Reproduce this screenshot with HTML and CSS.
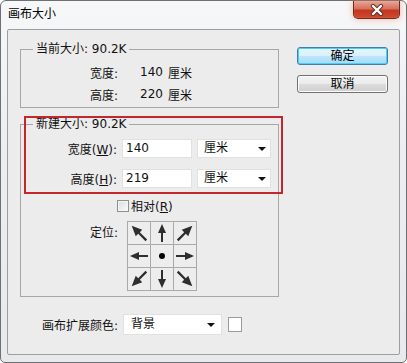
FILE: index.html
```html
<!DOCTYPE html>
<html lang="zh-CN">

<head>
    <meta charset="UTF-8">
    <title>画布大小</title>
    <link rel="stylesheet" href="styles.css">
</head>

<body>
    <div class="window">
        <div class="titlebar">
            <span class="title">画布大小</span>
            <button class="close" type="button">
                <svg width="14" height="12" viewBox="0 0 14 12">
                    <path d="M3 2 L11 10 M11 2 L3 10" stroke="#5a3028" stroke-width="4.2" stroke-linecap="round" />
                    <path d="M3 2 L11 10 M11 2 L3 10" stroke="#ffffff" stroke-width="2.4" stroke-linecap="round" />
                </svg>
            </button>
        </div>

        <div class="client">
            <div class="top">
                <div class="groups">
                    <fieldset class="group current">
                        <legend>当前大小: 90.2K</legend>
                        <div class="info">
                            <div class="info-row">
                                <span>宽度:</span>
                                <span class="num">140</span>
                                <span class="unit">厘米</span>
                            </div>
                            <div class="info-row">
                                <span>高度:</span>
                                <span class="num">220</span>
                                <span class="unit">厘米</span>
                            </div>
                        </div>
                    </fieldset>

                    <fieldset class="group new-size">
                        <legend>新建大小: 90.2K</legend>
                        <div class="field-row">
                            <label>宽度(<u>W</u>):</label>
                            <div class="input">140</div>
                            <div class="select unit-select">厘米<i class="caret"></i></div>
                        </div>
                        <div class="field-row">
                            <label>高度(<u>H</u>):</label>
                            <div class="input">219</div>
                            <div class="select unit-select">厘米<i class="caret"></i></div>
                        </div>
                        <div class="check-row">
                            <span class="checkbox"></span>
                            <span>相对(<u>R</u>)</span>
                        </div>
                        <div class="anchor-row">
                            <span class="anchor-label">定位:</span>
                            <div class="anchor">
                                <div class="cell"><svg class="arrow nw" viewBox="0 0 22 22"><path d="M11 2 L15 11 L12 11 L12 20 L10 20 L10 11 L7 11 Z" /></svg></div>
                                <div class="cell"><svg class="arrow n" viewBox="0 0 22 22"><path d="M11 2 L15 11 L12 11 L12 20 L10 20 L10 11 L7 11 Z" /></svg></div>
                                <div class="cell"><svg class="arrow ne" viewBox="0 0 22 22"><path d="M11 2 L15 11 L12 11 L12 20 L10 20 L10 11 L7 11 Z" /></svg></div>
                                <div class="cell"><svg class="arrow w" viewBox="0 0 22 22"><path d="M11 2 L15 11 L12 11 L12 20 L10 20 L10 11 L7 11 Z" /></svg></div>
                                <div class="cell"><span class="dot"></span></div>
                                <div class="cell"><svg class="arrow e" viewBox="0 0 22 22"><path d="M11 2 L15 11 L12 11 L12 20 L10 20 L10 11 L7 11 Z" /></svg></div>
                                <div class="cell"><svg class="arrow sw" viewBox="0 0 22 22"><path d="M11 2 L15 11 L12 11 L12 20 L10 20 L10 11 L7 11 Z" /></svg></div>
                                <div class="cell"><svg class="arrow s" viewBox="0 0 22 22"><path d="M11 2 L15 11 L12 11 L12 20 L10 20 L10 11 L7 11 Z" /></svg></div>
                                <div class="cell"><svg class="arrow se" viewBox="0 0 22 22"><path d="M11 2 L15 11 L12 11 L12 20 L10 20 L10 11 L7 11 Z" /></svg></div>
                            </div>
                        </div>
                    </fieldset>
                </div>

                <div class="buttons">
                    <button type="button" class="btn default">确定</button>
                    <button type="button" class="btn">取消</button>
                </div>
            </div>

            <div class="extend-row">
                <span>画布扩展颜色:</span>
                <div class="select color-select">背景<i class="caret"></i></div>
                <span class="swatch"></span>
            </div>

            <!-- annotation box drawn over the dialog -->
            <div class="highlight"></div>
        </div>
    </div>
</body>

</html>
```

FILE: styles.css
```css
body {
    margin: 0;
    padding: 0;
    font-family: "DejaVu Sans", "Noto Sans CJK SC", sans-serif;
    font-size: 12px;
    color: #111;
}

.window {
    width: 407px;
    height: 363px;
    box-sizing: border-box;
    border: 1px solid #6d6f72;
    border-radius: 6px 6px 5px 5px;
    padding: 0 6px 7px 6px;
    background: linear-gradient(#f6f7f8, #eceef0 40%, #e8e9eb);
    display: flex;
    flex-direction: column;
}

.titlebar {
    height: 28px;
    display: flex;
    justify-content: space-between;
    align-items: flex-start;
}

.title {
    margin: 6px 0 0 1px;
    line-height: 14px;
    color: #000;
}

.close {
    width: 47px;
    height: 18px;
    margin: 0;
    padding: 0;
    border: 1px solid #6b2a22;
    border-top: none;
    border-radius: 0 0 5px 5px;
    background: linear-gradient(#e9a696, #d8705c 45%, #c1361f 55%, #cf4a2c);
    box-shadow: 0 0 6px rgba(240, 120, 80, 0.55), inset 0 0 1px rgba(255, 255, 255, 0.6);
    display: flex;
    align-items: center;
    justify-content: center;
}

.client {
    position: relative;
    flex: 1;
    border: 1px solid #9c9ea1;
    border-radius: 2px;
    background: #ececec;
    padding: 12px 0 0 12px;
}

.top {
    display: flex;
    gap: 18px;
}

.groups {
    display: flex;
    flex-direction: column;
    gap: 9px;
}

.group {
    width: 259px;
    box-sizing: border-box;
    margin: 0;
    padding: 0;
    border: 1px solid #a7a7a7;
    border-radius: 0;
}

.group legend {
    margin-left: 12px;
    padding: 0 3px;
    line-height: 14px;
}

.info {
    padding: 5px 0 2px 69px;
}

.info-row {
    display: grid;
    grid-template-columns: 33px 40px auto;
    height: 22px;
    align-items: center;
}

.info-row .num {
    text-align: right;
}

.info-row .unit {
    padding-left: 5px;
}

.new-size {
    padding: 8px 0 5px 0;
    display: flex;
    flex-direction: column;
    gap: 11px;
}

.field-row {
    display: flex;
    align-items: center;
    gap: 5px;
    height: 19px;
}

.field-row label {
    width: 96px;
    text-align: right;
}

.input {
    width: 70px;
    height: 19px;
    box-sizing: border-box;
    background: #fff;
    border: 1px solid #e1e1e1;
    padding-left: 3px;
    line-height: 17px;
}

.select {
    position: relative;
    height: 19px;
    box-sizing: border-box;
    background: #fff;
    border: 1px solid #e1e1e1;
    line-height: 17px;
}

.unit-select {
    width: 74px;
    padding-left: 6px;
}

.caret {
    position: absolute;
    right: 4px;
    top: 7px;
    border-left: 4px solid transparent;
    border-right: 4px solid transparent;
    border-top: 4px solid #111;
}

.check-row {
    display: flex;
    align-items: center;
    gap: 2px;
    margin-left: 96px;
    height: 13px;
}

.checkbox {
    width: 12px;
    height: 12px;
    box-sizing: border-box;
    border: 1px solid #8e8f8f;
    background: linear-gradient(135deg, #dcdcdc, #fbfbfb);
    box-shadow: inset 0 0 0 1px #f4f4f4;
}

.anchor-row {
    display: flex;
    align-items: flex-start;
    gap: 9px;
    margin-top: -2px;
}

.anchor-label {
    width: 97px;
    text-align: right;
    margin-top: 2px;
}

.anchor {
    display: grid;
    grid-template-columns: repeat(3, 22px);
    grid-template-rows: repeat(3, 22px);
    gap: 1px;
    padding: 1px;
    background: #aaaaaa;
}

.cell {
    background: #ededed;
    display: flex;
    align-items: center;
    justify-content: center;
}

.arrow {
    width: 22px;
    height: 22px;
    fill: #2e2e2e;
}

.arrow.ne { transform: rotate(45deg) scale(1.15); }
.arrow.e { transform: rotate(90deg); }
.arrow.se { transform: rotate(135deg) scale(1.15); }
.arrow.s { transform: rotate(180deg); }
.arrow.sw { transform: rotate(225deg) scale(1.15); }
.arrow.w { transform: rotate(270deg); }
.arrow.nw { transform: rotate(315deg) scale(1.15); }

.dot {
    width: 6px;
    height: 6px;
    border-radius: 50%;
    background: #000;
}

.buttons {
    display: flex;
    flex-direction: column;
    gap: 10px;
    margin-top: 5px;
}

.btn {
    width: 91px;
    height: 18px;
    padding: 0;
    font-family: inherit;
    font-size: 12px;
    line-height: 14px;
    color: #000;
    border: 1px solid #707070;
    border-radius: 3px;
    background: linear-gradient(#f3f3f3, #ebebeb 50%, #dddddd 50%, #cfcfcf);
    box-shadow: inset 0 0 0 1px #fcfcfc;
}

.btn.default {
    border-color: #3c7fb1;
    background: linear-gradient(#eaf6fd, #d9f0fc 50%, #bee6fd 50%, #a7d9f5);
    box-shadow: inset 0 0 0 1px #48d1f7;
}

.extend-row {
    display: flex;
    align-items: center;
    margin: 17px 0 0 22px;
    height: 21px;
}

.color-select {
    width: 99px;
    height: 21px;
    margin-left: 5px;
    padding-left: 7px;
    line-height: 19px;
}

.color-select .caret {
    right: 6px;
    top: 8px;
}

.swatch {
    width: 14px;
    height: 15px;
    box-sizing: border-box;
    margin-left: 6px;
    background: #fff;
    border: 1px solid #9a9a9a;
}

.highlight {
    position: absolute;
    left: 16px;
    top: 86px;
    width: 259px;
    height: 78px;
    box-sizing: border-box;
    border: 2px solid #c3262c;
}
```
